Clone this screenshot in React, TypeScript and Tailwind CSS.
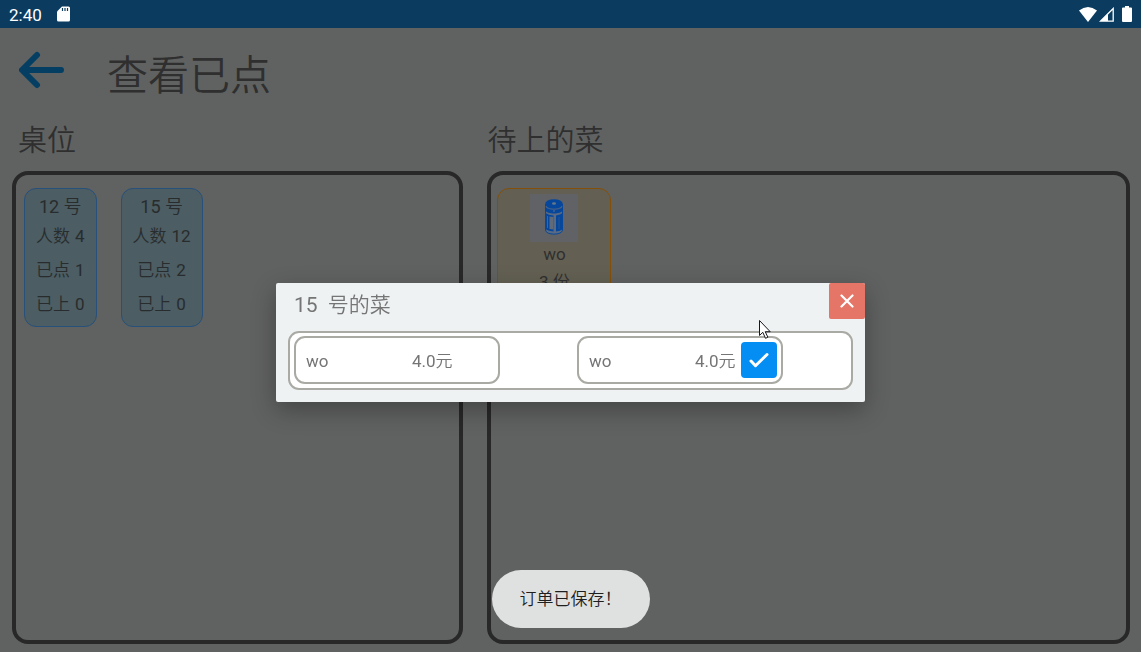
import React from "react";

type TableInfo = { id: number; people: number; ordered: number; served: number };
type Dish = { id: number; name: string; price: string; done: boolean };

const tables: TableInfo[] = [
  { id: 12, people: 4, ordered: 1, served: 0 },
  { id: 15, people: 12, ordered: 2, served: 0 },
];

const dishes: Dish[] = [
  { id: 1, name: "wo", price: "4.0", done: false },
  { id: 2, name: "wo", price: "4.0", done: true },
];

function StatusBar() {
  return (
    <div className="flex h-7 shrink-0 items-center justify-between bg-[#0b3c5f] px-[9px] font-normal text-white">
      <div className="flex items-center gap-[15px]">
        <span className="pt-[2px] text-[17px] leading-5">2:40</span>
        <svg width="13" height="16" viewBox="0 0 13 16" aria-hidden="true">
          <path d="M5 .5h6.500Q13 .5 13 2v12q0 1.500-1.500 1.500h-10Q0 15.500 0 14V5.500z" fill="#fff" />
          <path d="M5.500 2v3M8 2v3M10.500 2v3" stroke="#0b3c5f" strokeWidth="1.200" />
        </svg>
      </div>
      <div className="flex items-center gap-[2px]">
        <svg width="18" height="15" viewBox="0 0 18 15" fill="#fff" aria-hidden="true">
          <path d="M0 3.500Q9-3.500 18 3.500L9 15z" />
        </svg>
        <svg width="15" height="15" viewBox="0 0 15 15" aria-hidden="true">
          <path d="M14.200 1.500v12.700H1.500z" fill="none" stroke="#fff" strokeWidth="1.300" />
          <path d="M9 6.500V14H1.500z" fill="#fff" />
        </svg>
        <svg className="ml-[6px]" width="10" height="16" viewBox="0 0 10 16" fill="#fff" aria-hidden="true">
          <path d="M3 0h4v1.600h2q1 0 1 1V15q0 1-1 1H1q-1 0-1-1V2.600q0-1 1-1h2z" />
        </svg>
      </div>
    </div>
  );
}

function TableStat({ label, value }: { label: string; value: number }) {
  return (
    <span className="flex h-[34px] gap-[5px] leading-[30px]">
      <span>{label}</span>
      <span className="font-normal">{value}</span>
    </span>
  );
}

function TableCard({ table }: { table: TableInfo }) {
  return (
    <button
      type="button"
      className="flex flex-col items-center rounded-[12px] border border-[#27507a] bg-[#4c5d63] px-[11px] pb-[3px] pt-1 text-[17px] text-[#282c2d]"
    >
      <span className="h-7 text-[18px] leading-7">
        <span className="font-normal">{table.id}</span> 号
      </span>
      <TableStat label="人数" value={table.people} />
      <TableStat label="已点" value={table.ordered} />
      <TableStat label="已上" value={table.served} />
    </button>
  );
}

function CanIcon() {
  return (
    <svg width="48" height="48" viewBox="0 0 48 48" className="bg-[#606266]" aria-hidden="true">
      <path d="M15.500 10v26c0 5.500 17 5.500 17 0V10" fill="#5a6a82" stroke="#08499c" strokeWidth="1" />
      <ellipse cx="24" cy="10" rx="8.800" ry="4.800" fill="#06479c" />
      <ellipse cx="24" cy="9.500" rx="2" ry="1.200" fill="#66788c" />
      <path d="M15.200 12.500c2 4 15.600 4 17.600 0v4c-2 4-15.600 4-17.600 0z" fill="#06479c" />
      <path d="M15.500 12.600c2 3.600 15 3.600 17 0" fill="none" stroke="#3a5a88" strokeWidth=".7" />
      <circle cx="24" cy="17" r=".8" fill="#66788c" />
      <path d="M15.500 19q3 2.400 8 2.600V37.500q-5-.2-8-2.200z" fill="#06479c" />
      <path d="M19.500 22.500l4 .6v12.400l-4-.6z" fill="#606a78" />
      <path d="M17.500 22v12" stroke="#606a78" strokeWidth=".8" />
      <path d="M26 21.500q4.500-.6 6.500-2.500v16.300q-2 1.800-6.500 2.200z" fill="#06479c" />
      <path d="M29 23v12" stroke="#365a90" strokeWidth=".7" />
    </svg>
  );
}

function PointerCursor() {
  return (
    <svg
      className="pointer-events-none absolute right-[93px] top-[36px]"
      width="14"
      height="22"
      viewBox="0 0 14 22"
      aria-hidden="true"
    >
      <path
        d="M1.500 1.500v15l3.300-3.200 2.700 6 2.400-1.100-2.700-5.500h5z"
        fill="#fff"
        stroke="#17171f"
        strokeWidth="1"
      />
    </svg>
  );
}

function DishRow({ dish }: { dish: Dish }) {
  return (
    <li className="flex h-12 w-[206px] items-center rounded-[11px] border-2 border-[#aaaaa5] bg-white pl-[10px] pr-1 text-[17px] leading-6 text-[#757575]">
      <span className="w-[106px] pt-[2px] font-normal">{dish.name}</span>
      <span className="pt-[2px]">
        <span className="font-normal">{dish.price}</span>元
      </span>
      {dish.done && (
        <button
          type="button"
          aria-label="已上菜"
          className="ml-auto flex size-9 items-center justify-center rounded bg-[#048df3]"
        >
          <svg width="20" height="16" viewBox="0 0 20 16" fill="none" stroke="#fff" strokeWidth="3" strokeLinecap="round" strokeLinejoin="round" aria-hidden="true">
            <path d="M2 9l4.500 4.700L18 2.500" />
          </svg>
        </button>
      )}
    </li>
  );
}

export default function App() {
  return (
    <div className="flex min-h-screen flex-col bg-[#606261] font-['Roboto','Noto_Sans_CJK_SC',sans-serif] font-[350] text-[#2f2f2f]">
      <StatusBar />
      <main className="flex grow flex-col pb-2 pl-3 pr-[11px]">
        <header className="flex h-[84px] items-center gap-[42px] pl-[7px] pt-3">
          <button type="button" aria-label="返回" className="-mt-3">
            <svg width="46" height="38" viewBox="0 0 46 38" fill="none" stroke="#043f63" strokeWidth="6" strokeLinecap="round" strokeLinejoin="round" aria-hidden="true">
              <path d="M18 4L3 19l15 15M4 19h38" />
            </svg>
          </button>
          <h1 className="text-[41px] font-[350] leading-[60px]">查看已点</h1>
        </header>
        <div className="grid grow grid-cols-[451fr_642fr] gap-x-6">
          <section className="flex flex-col">
            <h2 className="h-[59px] pl-[6px] text-[29px] font-[350] leading-[58px]">桌位</h2>
            <div className="flex grow items-start gap-6 rounded-[16px] border-4 border-[#282828] px-2 py-[13px]">
              {tables.map((t) => (
                <TableCard key={t.id} table={t} />
              ))}
            </div>
          </section>
          <section className="flex flex-col">
            <h2 className="h-[59px] text-[29px] font-[350] leading-[58px]">待上的菜</h2>
            <div className="flex grow items-start rounded-[16px] border-4 border-[#282828] px-[6px] py-[13px]">
              <div className="flex w-[114px] flex-col items-center rounded-[12px] border border-[#835009] bg-[#636053] pb-2 pt-[5px] text-[17px] leading-7">
                <CanIcon />
                <span className="-mt-[2px] font-normal">wo</span>
                <span>
                  <span className="font-normal">3</span> 份
                </span>
              </div>
            </div>
          </section>
        </div>
      </main>

      <div className="fixed inset-x-0 bottom-0 top-7 flex items-center justify-center pt-[5px]">
        <div
          role="dialog"
          aria-labelledby="dialog-title"
          className="relative w-[589px] max-w-full rounded-[2px] bg-[#eef2f3] px-3 pb-3 shadow-[0_8px_24px_rgba(0,0,0,0.3)]"
        >
          <div className="flex h-12 items-start justify-between">
            <h2 id="dialog-title" className="whitespace-pre pl-[6px] text-[21px] font-[350] leading-[44px] text-[#757575]">
              <span className="font-normal">15</span>{"  "}号的菜
            </h2>
            <button type="button" aria-label="关闭" className="-mr-3 flex size-9 items-center justify-center rounded-[2px] bg-[#e57567]">
              <svg width="14" height="14" viewBox="0 0 14 14" stroke="#fff" strokeWidth="2.200" strokeLinecap="round" aria-hidden="true">
                <path d="M1.500 1.500l11 11M12.500 1.500l-11 11" />
              </svg>
            </button>
          </div>
          <ul className="flex gap-[77px] rounded-[11px] border-2 border-[#aaaaa5] bg-white p-[3px_4px_4px]">
            {dishes.map((d) => (
              <DishRow key={d.id} dish={d} />
            ))}
          </ul>
          <PointerCursor />
        </div>
      </div>

      <div role="status" className="fixed inset-x-0 bottom-6 flex justify-center">
        <p className="rounded-full bg-[#dfe1e0] px-7 py-[17px] text-[17px] leading-6 text-[#1f1f1f]">订单已保存！</p>
      </div>
    </div>
  );
}
